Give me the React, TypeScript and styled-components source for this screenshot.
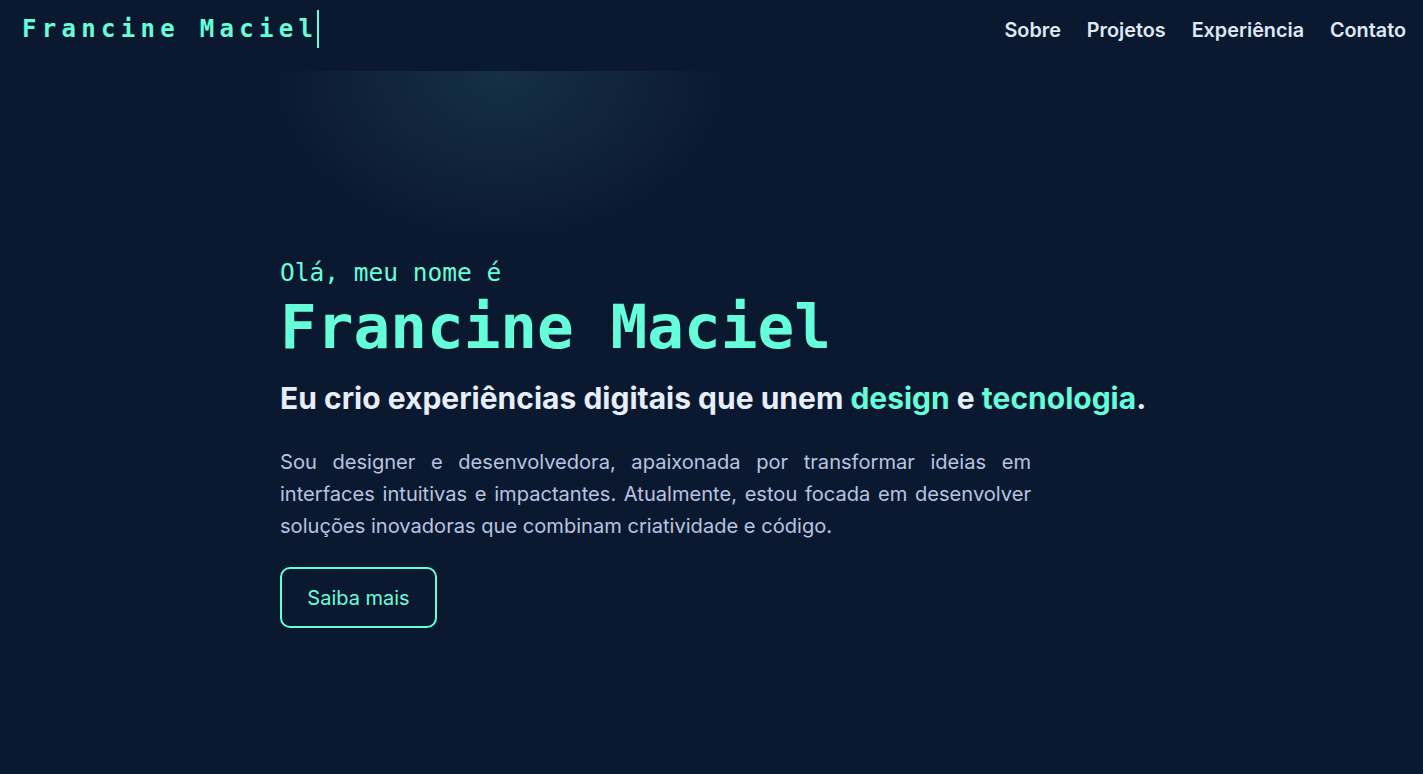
import React from "react";
import styled, { createGlobalStyle } from "styled-components";

const Global = createGlobalStyle`
  html, body { margin: 0; padding: 0; background: #0b1930; }
  body { font-family: Inter, "Noto Sans", sans-serif; }
  * { box-sizing: border-box; }
`;

const Page = styled.div`
  min-height: 774px;
  background: #0b1930;
  display: flex;
  flex-direction: column;
`;

const Header = styled.header`
  height: 71px;
  display: flex;
  align-items: flex-start;
  justify-content: space-between;
  padding: 10px 17px 0 22px;
`;

const Logo = styled.div`
  display: flex;
  align-items: center;
  font-family: "DejaVu Sans Mono", "Liberation Mono", monospace;
  font-weight: 700;
  font-size: 24px;
  letter-spacing: 5.3px;
  color: #64ffda;
  height: 38px;
`;

const Cursor = styled.span`
  display: inline-block;
  width: 2px;
  height: 38px;
  background: #64ffda;
  margin-left: -1px;
`;

const Nav = styled.nav`
  display: flex;
  gap: 26px;
  height: 39px;
  align-items: center;
`;

const NavLink = styled.a`
  font-family: Inter, sans-serif;
  font-weight: 600;
  font-size: 19.8px;
  color: #dfe8f7;
  text-decoration: none;
`;

const Hero = styled.section`
  flex: 1;
  background:
    radial-gradient(ellipse 230px 170px at 500px 0px, rgba(40, 90, 110, 0.35), rgba(11, 25, 48, 0) 100%);
  padding: 183px 0 0 280px;
`;

const Content = styled.div`
  display: flex;
  flex-direction: column;
  align-items: flex-start;
`;

const Greeting = styled.p`
  margin: 0;
  font-family: "DejaVu Sans Mono", "Liberation Mono", monospace;
  font-size: 24.5px;
  color: #64ffda;
  line-height: 38px;
`;

const Name = styled.h1`
  margin: 0;
  font-family: "DejaVu Sans Mono", "Liberation Mono", monospace;
  font-weight: 700;
  font-size: 61px;
  color: #64ffda;
  line-height: 70px;
`;

const Tagline = styled.h2`
  margin: 16px 0 0;
  font-family: Inter, sans-serif;
  font-weight: 700;
  font-size: 30px;
  color: #e6eefb;
  line-height: 40px;
`;

const Accent = styled.span`
  color: #64ffda;
`;

const Bio = styled.p`
  margin: 28px 0 0;
  width: 751px;
  font-family: Inter, sans-serif;
  font-size: 20.1px;
  line-height: 32px;
  color: #b8c4e0;
  text-align: justify;
`;

const Button = styled.button`
  margin-top: 25px;
  width: 157px;
  height: 61px;
  border: 2px solid #64ffda;
  border-radius: 10px;
  background: transparent;
  color: #64ffda;
  font-family: Inter, sans-serif;
  font-size: 20px;
  cursor: pointer;
`;

export default function App() {
  return (
    <>
      <Global />
      <Page>
        <Header>
          <Logo>
            Francine Maciel
            <Cursor />
          </Logo>
          <Nav>
            <NavLink href="#sobre">Sobre</NavLink>
            <NavLink href="#projetos">Projetos</NavLink>
            <NavLink href="#experiencia">Experiência</NavLink>
            <NavLink href="#contato">Contato</NavLink>
          </Nav>
        </Header>
        <Hero>
          <Content>
            <Greeting>Olá, meu nome é</Greeting>
            <Name>Francine Maciel</Name>
            <Tagline>
              Eu crio experiências digitais que unem <Accent>design</Accent> e{" "}
              <Accent>tecnologia</Accent>.
            </Tagline>
            <Bio>
              Sou designer e desenvolvedora, apaixonada por transformar ideias em
              interfaces intuitivas e impactantes. Atualmente, estou focada em
              desenvolver soluções inovadoras que combinam criatividade e código.
            </Bio>
            <Button>Saiba mais</Button>
          </Content>
        </Hero>
      </Page>
    </>
  );
}
